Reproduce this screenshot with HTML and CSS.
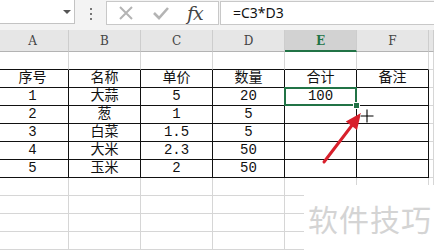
FILE: index.html
```html
<!DOCTYPE html>
<html lang="zh-CN">

<head>
  <meta charset="UTF-8">
  <title>表格 - 合计</title>
  <link rel="stylesheet" href="styles.css">
</head>

<body>

  <div class="toolbar">
    <div class="namebox"><span class="drop"></span></div>
    <div class="dots"><i></i><i></i><i></i></div>
    <div class="fxbox">
      <svg class="ico" width="18" height="16" viewBox="0 0 18 16">
        <path d="M3 2 L15 14 M15 2 L3 14" stroke="#b4b4b4" stroke-width="2" fill="none"/>
      </svg>
      <svg class="ico" width="18" height="16" viewBox="0 0 18 16">
        <path d="M2 8 L7 13 L16 3" stroke="#b4b4b4" stroke-width="2.6" fill="none"/>
      </svg>
      <span class="fx">fx</span>
    </div>
    <div class="formula">=C3*D3</div>
  </div>

  <div class="sheet">
    <!-- column headers -->
    <div class="hd">A</div><div class="hd">B</div><div class="hd">C</div><div class="hd">D</div><div class="hd cur">E</div><div class="hd">F</div><div class="hd"></div>

    <!-- blank row above the table -->
    <div class="c top"></div><div class="c top"></div><div class="c top"></div><div class="c top"></div><div class="c top"></div><div class="c top"></div><div class="c"></div>

    <div class="c d">序号</div><div class="c d">名称</div><div class="c d">单价</div><div class="c d">数量</div><div class="c d">合计</div><div class="c d">备注</div><div class="c"></div>
    <div class="c d">1</div><div class="c d">大蒜</div><div class="c d">5</div><div class="c d">20</div><div class="c d sel">100<span class="handle"></span></div><div class="c d"></div><div class="c"></div>
    <div class="c d">2</div><div class="c d">葱</div><div class="c d">1</div><div class="c d">5</div><div class="c d"></div><div class="c d"></div><div class="c"></div>
    <div class="c d">3</div><div class="c d">白菜</div><div class="c d">1.5</div><div class="c d">5</div><div class="c d"></div><div class="c d"></div><div class="c"></div>
    <div class="c d">4</div><div class="c d">大米</div><div class="c d">2.3</div><div class="c d">50</div><div class="c d"></div><div class="c d"></div><div class="c"></div>
    <div class="c d">5</div><div class="c d">玉米</div><div class="c d">2</div><div class="c d">50</div><div class="c d"></div><div class="c d"></div><div class="c"></div>

    <!-- empty rows -->
    <div class="c"></div><div class="c"></div><div class="c"></div><div class="c"></div><div class="c"></div><div class="c"></div><div class="c"></div>
    <div class="c"></div><div class="c"></div><div class="c"></div><div class="c"></div><div class="c"></div><div class="c"></div><div class="c"></div>
    <div class="c"></div><div class="c"></div><div class="c"></div><div class="c"></div><div class="c"></div><div class="c"></div><div class="c"></div>
    <div class="c"></div><div class="c"></div><div class="c"></div><div class="c"></div><div class="c"></div><div class="c"></div><div class="c"></div>

    <!-- red arrow pointing at the fill handle -->
    <svg class="arrow" width="434" height="222" viewBox="0 30 434 222">
      <line x1="324" y1="162" x2="353" y2="124" stroke="#d8202c" stroke-width="3" stroke-linecap="round"/>
      <polygon points="361,113 357,130 345.8,121.6" fill="#d8202c"/>
    </svg>

    <!-- fill cursor -->
    <svg class="cursor" width="16" height="16" viewBox="0 0 16 16">
      <path d="M8 1 V15 M1 8 H15" stroke="#fff" stroke-width="3"/>
      <path d="M8 1.5 V14.5 M1.5 8 H14.5" stroke="#000" stroke-width="1.1"/>
    </svg>

    <div class="mark">软件技巧</div>
  </div>

</body>

</html>
```

FILE: styles.css
```css
body {
  margin: 0;
  width: 434px;
  height: 252px;
  overflow: hidden;
  background-color: #fff;
  font-family: "Noto Sans", sans-serif;
}

.toolbar {
  display: flex;
  align-items: flex-start;
  height: 30px;
  background-color: #f3f3f3;
}

.namebox {
  position: relative;
  width: 75px;
  height: 24px;
  background-color: #fff;
  border-right: 1px solid #c3c3c3;
  border-bottom: 1px solid #c3c3c3;
  box-sizing: border-box;
}

.drop {
  position: absolute;
  left: 63px;
  top: 10px;
  border-left: 4px solid transparent;
  border-right: 4px solid transparent;
  border-top: 4px solid #555;
}

.dots {
  display: flex;
  flex-direction: column;
  gap: 3px;
  width: 31px;
  padding-top: 8px;
  align-items: center;
}

.dots i {
  width: 2px;
  height: 2px;
  background-color: #777;
}

.fxbox {
  display: flex;
  align-items: center;
  gap: 17px;
  width: 113px;
  height: 24px;
  margin-top: 1px;
  padding-left: 10px;
  box-sizing: border-box;
  background-color: #fff;
  border: 1px solid #c8c8c8;
}

.fx {
  font-family: "DejaVu Serif", serif;
  font-style: italic;
  font-size: 19px;
  line-height: 20px;
  color: #444;
  letter-spacing: -1px;
}

.formula {
  flex: 1;
  height: 24px;
  margin-top: 1px;
  margin-left: 1px;
  padding-left: 12px;
  box-sizing: border-box;
  background-color: #fff;
  border: 1px solid #c8c8c8;
  border-right: none;
  font-size: 14px;
  line-height: 21px;
  color: #111;
}

.sheet {
  position: relative;
  display: grid;
  grid-template-columns: 69px repeat(5, 72px) 1fr;
  grid-template-rows: 22px;
  grid-auto-rows: 18px;
}

.hd {
  background-color: #e6e6e6;
  border-right: 1px solid #cdcdcd;
  border-bottom: 1px solid #b3b3b3;
  box-sizing: border-box;
  text-align: center;
  font-family: "DejaVu Serif", serif;
  font-size: 12px;
  line-height: 22px;
  color: #444;
}

.hd:first-child {
  text-indent: -3px;
}

.hd.cur {
  background-color: #d2d2d2;
  border-bottom: 2px solid #217346;
  color: #217346;
  font-weight: bold;
}

.c {
  border-right: 1px solid #d6d6d6;
  border-bottom: 1px solid #d6d6d6;
  box-sizing: border-box;
  text-align: center;
  font-family: "Liberation Mono", "Noto Sans CJK SC", monospace;
  font-size: 14px;
  line-height: 17px;
  color: #111;
}

.c:nth-child(7n+1) {
  text-indent: -3px;
}

.c.top {
  border-bottom-color: #111;
}

.c.d {
  border-right-color: #111;
  border-bottom-color: #111;
}

.sel {
  position: relative;
}

.sel::after {
  content: "";
  position: absolute;
  left: -1px;
  top: -1px;
  right: -1px;
  bottom: -1px;
  border: 2px solid #217346;
}

.handle {
  position: absolute;
  right: -4px;
  bottom: -4px;
  width: 5px;
  height: 5px;
  background-color: #217346;
  border: 1px solid #fff;
  z-index: 2;
}

.arrow {
  position: absolute;
  left: 0;
  top: 0;
}

.cursor {
  position: absolute;
  left: 359px;
  top: 78px;
}

.mark {
  position: absolute;
  left: 304px;
  top: 155px;
  width: 130px;
  height: 67px;
  padding-left: 4px;
  box-sizing: border-box;
  background-color: #fff;
  font-family: "Noto Sans CJK SC", sans-serif;
  font-size: 30px;
  line-height: 66px;
  color: #d4d4d4;
  letter-spacing: 1px;
}
```
